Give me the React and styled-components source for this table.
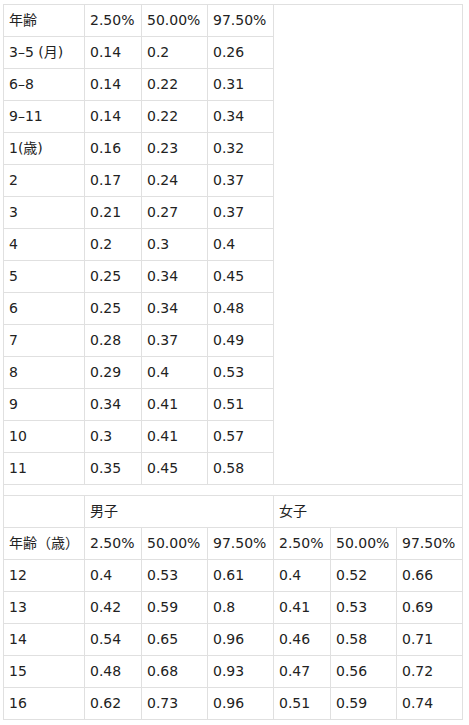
import React from 'react';
import styled, { createGlobalStyle } from 'styled-components';


// data
const childRows = [
  ['3–5 (月)', '0.14', '0.2', '0.26'],
  ['6–8', '0.14', '0.22', '0.31'],
  ['9–11', '0.14', '0.22', '0.34'],
  ['1(歳)', '0.16', '0.23', '0.32'],
  ['2', '0.17', '0.24', '0.37'],
  ['3', '0.21', '0.27', '0.37'],
  ['4', '0.2', '0.3', '0.4'],
  ['5', '0.25', '0.34', '0.45'],
  ['6', '0.25', '0.34', '0.48'],
  ['7', '0.28', '0.37', '0.49'],
  ['8', '0.29', '0.4', '0.53'],
  ['9', '0.34', '0.41', '0.51'],
  ['10', '0.3', '0.41', '0.57'],
  ['11', '0.35', '0.45', '0.58'],
];

const teenRows = [
  ['12', '0.4', '0.53', '0.61', '0.4', '0.52', '0.66'],
  ['13', '0.42', '0.59', '0.8', '0.41', '0.53', '0.69'],
  ['14', '0.54', '0.65', '0.96', '0.46', '0.58', '0.71'],
  ['15', '0.48', '0.68', '0.93', '0.47', '0.56', '0.72'],
  ['16', '0.62', '0.73', '0.96', '0.51', '0.59', '0.74'],
];

const percentiles = ['2.50%', '50.00%', '97.50%'];
const colWidths = [81, 57, 66, 66, 57, 66, 66];


// styles
const GlobalStyle = createGlobalStyle`
  body {
    margin: 0;
    background: #fff;
  }
`;

const Page = styled.div`
  padding: 4px 3px;
`;

const Table = styled.table`
  border-collapse: collapse;
  table-layout: fixed;
  width: 460px;
  color: #222;
  font-family: "DejaVu Sans", "Noto Sans CJK JP", sans-serif;
  font-size: 14px;
  line-height: 21px;
`;

const Cell = styled.td`
  border: 1px solid #e0e0e0;
  padding: 5px;
  text-align: left;
  vertical-align: middle;
  white-space: nowrap;
  overflow: hidden;
`;


// view
const Row = ({ cells }) => (
  <tr>
    {cells.map((c, i) => <Cell key={i}>{c}</Cell>)}
  </tr>
);

const App = () => (
  <>
    <GlobalStyle />
    <Page>
      <Table>
        <colgroup>
          {colWidths.map((w, i) => <col key={i} style={{ width: w }} />)}
        </colgroup>
        <tbody>
          <tr>
            <Cell>年齢</Cell>
            {percentiles.map((p) => <Cell key={p}>{p}</Cell>)}
            <Cell colSpan={3} rowSpan={childRows.length + 1} />
          </tr>
          {childRows.map((r) => <Row key={r[0]} cells={r} />)}
          <tr>
            <Cell colSpan={7} />
          </tr>
          <tr>
            <Cell />
            <Cell colSpan={3}>男子</Cell>
            <Cell colSpan={3}>女子</Cell>
          </tr>
          <Row cells={['年齢（歳）', ...percentiles, ...percentiles]} />
          {teenRows.map((r) => <Row key={r[0]} cells={r} />)}
        </tbody>
      </Table>
    </Page>
  </>
);


// exports
export default App;
